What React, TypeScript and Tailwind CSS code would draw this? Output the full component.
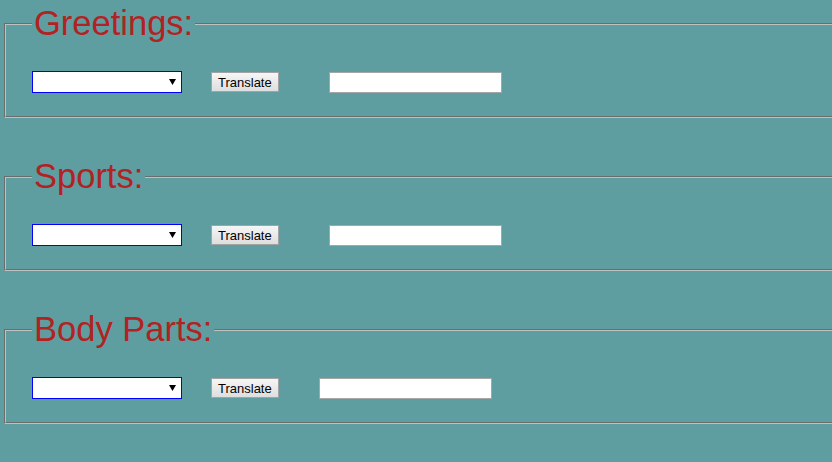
import React from 'react'

const sections = [
  { title: 'Greetings:', gap: 'ml-[50px]' },
  { title: 'Sports:', gap: 'ml-[50px]' },
  { title: 'Body Parts:', gap: 'ml-[40px]' },
]

function Section({ title, gap }: { title: string; gap: string }) {
  return (
    <fieldset className="w-[860px] border-2 border-[#c0c0c0] [border-style:groove] pl-[26px] pb-[23px] m-0">
      <legend className="px-[2px] text-[34.5px] leading-[39px] text-[#b22222]">{title}</legend>
      <div className="mt-[28px] flex items-center">
        <div className="relative h-[22px] w-[150px]">
          <select className="h-full w-full appearance-none border border-[#0000ff] bg-white outline-none" />
          <svg
            className="pointer-events-none absolute left-[137px] top-[8px]"
            width="7"
            height="6"
            viewBox="0 0 7 6"
          >
            <path d="M0 0h7L3.5 6z" fill="#000" />
          </svg>
        </div>
        <button className="ml-[29px] h-[20px] border border-[#a3a3a3] bg-gradient-to-b from-[#f6f6f6] to-[#dedede] px-[6px] text-[13px] leading-none text-black">
          Translate
        </button>
        <input
          type="text"
          className={`${gap} h-[21px] w-[173px] border border-[#a6a6a6] bg-white outline-none`}
        />
      </div>
    </fieldset>
  )
}

export default function App() {
  return (
    <div className="min-h-screen w-full overflow-hidden bg-[#5f9ea0] pt-[4px] pl-[4px] font-['Liberation_Sans',Arial,sans-serif]">
      <div className="flex flex-col gap-[39px]">
        {sections.map((s) => (
          <Section key={s.title} title={s.title} gap={s.gap} />
        ))}
      </div>
    </div>
  )
}
